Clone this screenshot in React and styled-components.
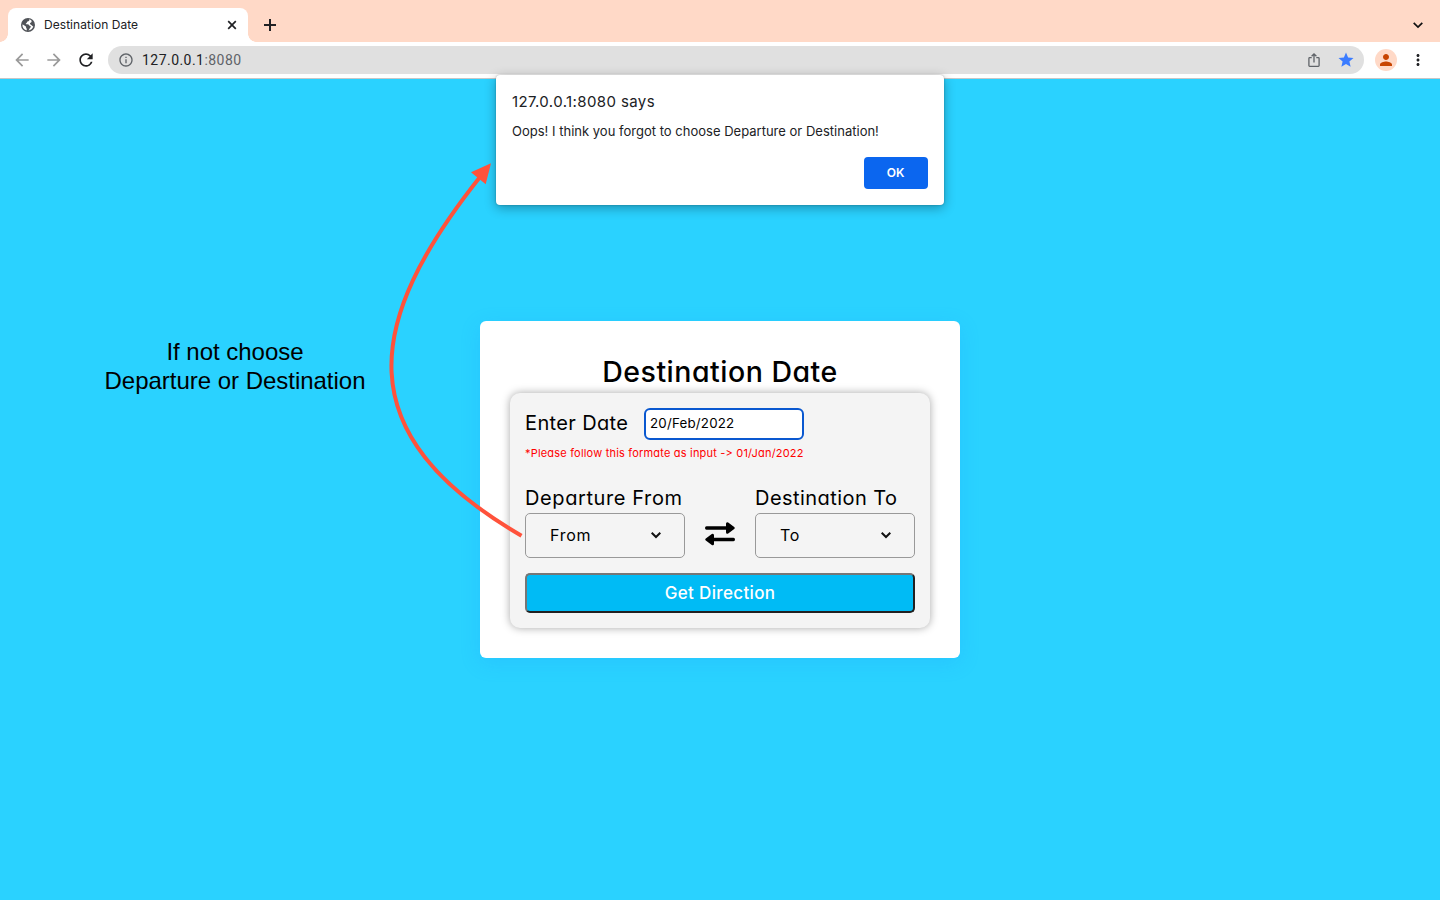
import React from "react";
import styled, { createGlobalStyle } from "styled-components";
import { MdArrowBack, MdArrowForward, MdRefresh, MdInfoOutline, MdStar, MdPerson, MdMoreVert } from "react-icons/md";

const GlobalStyle = createGlobalStyle`
  * { box-sizing: border-box; }
  body { margin: 0; overflow: hidden; background: #2ad2ff; }
  svg { display: block; flex: none; }
`;

const Window = styled.div`
  position: relative;
  width: 1440px;
  height: 900px;
  display: flex;
  flex-direction: column;
  overflow: hidden;
  background: #2ad2ff;
  color: #000;
`;

const TabStrip = styled.div`
  height: 42px;
  padding: 8px 17px 0 8px;
  background: #ffd9c7;
  display: flex;
  align-items: flex-start;
`;

const Tab = styled.div`
  position: relative;
  width: 240px;
  height: 34px;
  padding: 0 11px 0 12px;
  border-radius: 8px 8px 0 0;
  background: #fff;
  display: flex;
  align-items: center;
  font: 12px Inter, sans-serif;
  color: #202124;
  &::before, &::after {
    content: "";
    position: absolute;
    bottom: 0;
    width: 8px;
    height: 8px;
  }
  &::before { left: -8px; background: radial-gradient(circle at 0 0, transparent 7.5px, #fff 8px); }
  &::after { right: -8px; background: radial-gradient(circle at 100% 0, transparent 7.5px, #fff 8px); }
`;

const TabTitle = styled.span`
  flex: 1;
  margin-left: 8px;
  padding-bottom: 2px;
  letter-spacing: 0.05px;
`;

const NewTab = styled.div`
  margin: 11px auto 0 16px;
`;

const TabMenu = styled.div`
  margin-top: 12px;
`;

const Toolbar = styled.div`
  height: 37px;
  flex: none;
  padding: 4px 13px 4px 12px;
  background: #fff;
  border-bottom: 1px solid #c6c6c6;
  display: flex;
  align-items: center;
`;

const NavButtons = styled.div`
  width: 96px;
  display: flex;
  gap: 12px;
`;

const AddressBar = styled.div`
  width: 1256px;
  height: 28px;
  padding: 0 9px 0 10px;
  border-radius: 14px;
  background: #e0e0e0;
  display: flex;
  align-items: center;
  font: 14px Roboto, sans-serif;
  letter-spacing: 0.46px;
  color: #202124;
`;

const Url = styled.span`
  flex: 1;
  margin-left: 8px;
`;

const Port = styled.span`
  color: #5f6368;
`;

const ShareSlot = styled.div`
  margin-right: 15px;
`;

const Avatar = styled.div`
  width: 22px;
  height: 22px;
  margin: 0 12px 0 11px;
  border-radius: 50%;
  background: #ffd9c7;
  display: flex;
  align-items: center;
  justify-content: center;
`;

const Page = styled.main`
  flex: 1;
  padding-top: 242px;
`;

const Card = styled.section`
  width: 480px;
  height: 337px;
  margin: 0 auto;
  padding: 30px;
  border-radius: 6px;
  background: #fff;
  box-shadow: 0 5px 20px rgba(32, 150, 255, 0.2);
  font-family: Inter, sans-serif;
  font-feature-settings: "cv11";
`;

const Title = styled.h1`
  height: 42px;
  margin: 0;
  font-size: 28.5px;
  font-weight: 500;
  line-height: 41px;
  text-align: center;
  letter-spacing: 0.5px;
  white-space: nowrap;
`;

const Form = styled.div`
  height: 235px;
  padding: 15px;
  border-radius: 10px;
  background: #f4f4f4;
  box-shadow: 0 0 8px rgba(0, 0, 0, 0.35);
`;

const DateRow = styled.div`
  display: flex;
  height: 32px;
`;

const Label = styled.label`
  display: block;
  width: ${(p) => p.$width || "160px"};
  font-size: 20px;
  line-height: 30px;
  letter-spacing: ${(p) => p.$spacing};
  white-space: nowrap;
`;

const DateInput = styled.input`
  width: 160px;
  height: 32px;
  padding: 0 4px 2px;
  border: 2px solid #0a58d0;
  border-radius: 6px;
  outline: 0;
  background: #fff;
  color: #000;
  font: 13.33px Inter, sans-serif;
  font-feature-settings: "cv11";
  letter-spacing: 0.2px;
`;

const Hint = styled.p`
  height: 35px;
  margin: 0 0 8px;
  padding-top: 5px;
  font-size: 11px;
  line-height: 17px;
  color: #f00;
  letter-spacing: 0.19px;
  white-space: nowrap;
`;

const Places = styled.div`
  display: flex;
  justify-content: space-between;
`;

const Field = styled.div`
  width: 160px;
`;

const Select = styled.div`
  height: 45px;
  padding: 0 23px 2px 24px;
  border: 1px solid #999;
  border-radius: 5px;
  display: flex;
  align-items: center;
  justify-content: space-between;
  font-size: 16px;
  letter-spacing: 0.7px;
`;

const SwapSlot = styled.div`
  padding-top: 39px;
`;

const Submit = styled.button`
  width: 100%;
  height: 40px;
  margin-top: 15px;
  padding: 0;
  border: 2px solid;
  border-color: #767676 #212121 #212121 #767676;
  border-radius: 5px;
  background: #00bbf5;
  color: #fff;
  font: 500 17px Inter, sans-serif;
  font-feature-settings: "cv11";
  letter-spacing: 0.35px;
`;

const Dialog = styled.div`
  position: absolute;
  left: 496px;
  top: 75px;
  width: 448px;
  height: 130px;
  padding: 16px;
  border-radius: 4px;
  background: #fff;
  box-shadow: 0 3px 12px rgba(0, 0, 0, 0.32), 0 0 2px rgba(0, 0, 0, 0.3);
  font-family: Inter, sans-serif;
  color: #202124;
  display: flex;
  flex-direction: column;
`;

const DialogTitle = styled.div`
  font-size: 15px;
  line-height: 22px;
  letter-spacing: 0.39px;
`;

const DialogText = styled.div`
  margin-top: 8px;
  font-size: 13px;
  line-height: 20px;
  letter-spacing: 0.01px;
  white-space: nowrap;
`;

const OkButton = styled.button`
  width: 64px;
  height: 32px;
  margin: 16px 0 0 auto;
  padding: 0 1px 2px 0;
  border: 0;
  border-radius: 4px;
  background: #0b66ef;
  color: #fff;
  font: 600 12px Inter, sans-serif;
`;

const Note = styled.div`
  position: absolute;
  left: 85px;
  top: 337px;
  width: 300px;
  font: 24px/29px "Liberation Sans", Arial, sans-serif;
  letter-spacing: -0.02px;
  text-align: center;
`;

const Arrow = styled.svg`
  position: absolute;
  left: 380px;
  top: 155px;
`;

function GlobeIcon() {
  return (
    <svg width="16" height="16" viewBox="0 0 16 16">
      <circle cx="8" cy="8" r="7" fill="#505358" />
      <path d="M9.2 2.3C9.8 3.6 8.8 4.4 7.6 4.5 6.8 4.7 7.2 5.8 6.3 6.2 5.4 6.6 5.8 7.3 7.2 7.2 8.8 7.1 9.3 8 9.4 8.8 10.6 8.7 11.2 9.6 10.5 10.5 9.6 11.2 9.6 12.4 8.3 13.6 10.8 13.4 12.6 11.7 13.3 9.6 12 9.2 11.8 7.9 10.6 7.6 9.6 7.2 9.8 5.9 10.9 5.6 11.6 5.2 11.8 4.4 11.4 3.5 10.8 2.9 10.1 2.5 9.2 2.3ZM2.4 7.4C3.7 7.6 4.4 8.6 5.6 9.2 6.4 9.8 5.8 10.7 6.6 11.4 7 12.1 6.8 12.9 6.4 13.4 3.8 12.6 2.2 10.2 2.4 7.4Z" fill="#fff" />
    </svg>
  );
}

function CloseIcon() {
  return (
    <svg width="10" height="10" viewBox="0 0 10 10" fill="none" stroke="#202124" strokeWidth="1.7">
      <path d="M1.2 1.2 8.8 8.8M8.8 1.2 1.2 8.8" />
    </svg>
  );
}

function PlusIcon() {
  return (
    <svg width="12" height="12" viewBox="0 0 12 12" fill="none" stroke="#202124" strokeWidth="2">
      <path d="M6 0V12M0 6H12" />
    </svg>
  );
}

function ShareIcon() {
  return (
    <svg width="16" height="16" viewBox="0 0 16 16" fill="none" stroke="#5f6368" strokeWidth="1.3">
      <path d="M5.7 5.6H3.7Q2.9 5.6 2.9 6.4V13.6Q2.9 14.4 3.7 14.4H12.3Q13.1 14.4 13.1 13.6V6.4Q13.1 5.6 12.3 5.6H10.3M8 10.5V1.8M5.6 4.2 8 1.8 10.4 4.2" />
    </svg>
  );
}

function Chevron({ size = 10, weight = 2 }) {
  return (
    <svg width={size} height={size} viewBox="0 0 10 10" fill="none" stroke="#111" strokeWidth={weight}>
      <path d="M.7 2.8 5 7 9.3 2.8" />
    </svg>
  );
}

function SwapIcon() {
  return (
    <svg width="30" height="24" viewBox="0 0 30 24">
      <path d="M1.5 4.2H21V1.8Q21 -.4 23.2 .4L29.2 5.1Q30.3 6 29.2 6.9L23.2 11.6Q21 12.4 21 10.2V7.8H1.5Q0 7.8 0 6T1.5 4.2Z" />
      <path d="M28.5 15.7H9V13.3Q9 11.1 6.8 11.9L.8 16.6Q-.3 17.5 .8 18.4L6.8 23.1Q9 23.9 9 21.7V19.3H28.5Q30 19.3 30 17.5T28.5 15.7Z" />
    </svg>
  );
}

export default function App() {
  return (
    <>
      <GlobalStyle />
      <Window>
        <TabStrip>
          <Tab>
            <GlobeIcon />
            <TabTitle>Destination Date</TabTitle>
            <CloseIcon />
          </Tab>
          <NewTab><PlusIcon /></NewTab>
          <TabMenu><Chevron size={10} weight={1.7} /></TabMenu>
        </TabStrip>
        <Toolbar>
          <NavButtons>
            <MdArrowBack size={20} color="#9a9a9a" />
            <MdArrowForward size={20} color="#9a9a9a" />
            <MdRefresh size={20} color="#202124" />
          </NavButtons>
          <AddressBar>
            <MdInfoOutline size={16} color="#5f6368" />
            <Url>127.0.0.1<Port>:8080</Port></Url>
            <ShareSlot><ShareIcon /></ShareSlot>
            <MdStar size={18} color="#3b7cff" />
          </AddressBar>
          <Avatar><MdPerson size={18} color="#c84400" /></Avatar>
          <MdMoreVert size={18} color="#202124" />
        </Toolbar>
        <Page>
          <Card>
            <Title>Destination Date</Title>
            <Form>
              <DateRow>
                <Label $width="119px" $spacing="0.36px">Enter Date</Label>
                <DateInput defaultValue="20/Feb/2022" />
              </DateRow>
              <Hint>*Please follow this formate as input -&gt; 01/Jan/2022</Hint>
              <Places>
                <Field>
                  <Label $spacing="0.6px">Departure From</Label>
                  <Select>From<Chevron /></Select>
                </Field>
                <SwapSlot><SwapIcon /></SwapSlot>
                <Field>
                  <Label $spacing="0.45px">Destination To</Label>
                  <Select>To<Chevron /></Select>
                </Field>
              </Places>
              <Submit>Get Direction</Submit>
            </Form>
          </Card>
        </Page>
        <Note>If not choose<br />Departure or Destination</Note>
        <Dialog>
          <DialogTitle>127.0.0.1:8080 says</DialogTitle>
          <DialogText>Oops! I think you forgot to choose Departure or Destination!</DialogText>
          <OkButton>OK</OkButton>
        </Dialog>
        <Arrow width="150" height="390" viewBox="380 155 150 390">
          <path d="M521.5 535.7C346.5 434 364 323 480 177" fill="none" stroke="#ff523b" strokeWidth="4" />
          <path d="M491 163.3 471 172.3 485.7 184.3Z" fill="#ff523b" />
        </Arrow>
      </Window>
    </>
  );
}
